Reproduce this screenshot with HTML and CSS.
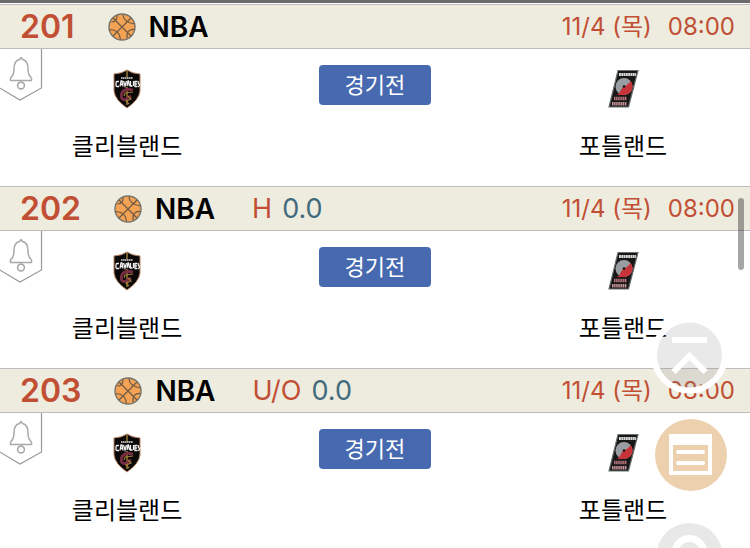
FILE: index.html
```html
<!DOCTYPE html>
<html lang="ko">
<head>
<meta charset="utf-8">
<meta name="viewport" content="width=device-width, initial-scale=1">
<title>NBA 경기 목록</title>
<link rel="stylesheet" href="styles.css">
</head>
<body>
<svg class="defs" aria-hidden="true">
  <symbol id="ball" viewBox="0 0 28 28">
    <circle cx="14" cy="14" r="13" fill="#f4a355" stroke="#77736a" stroke-width="1.400"/>
    <path d="M5 5 23 23M23 5 5 23M15 1.500Q15 9 26.500 11M1.500 16.500Q12 17 12.500 26.500M26.500 16.500Q18 16 19 25M3.500 9Q9 9 9 3" fill="none" stroke="#6f5a44" stroke-width="1.200"/>
  </symbol>
  <symbol id="bell" viewBox="0 0 43 53">
    <path d="M-1 -1H41.500V39L20 51 -1 38.500" fill="#fff" stroke="#999" stroke-width="1.200"/>
    <path d="M10.500 31.500V29Q14 26 14 20Q14 11.500 19.500 10.500L21 8.500 22.500 10.500Q28 11.500 28 20Q28 26 31.500 29V31.500Z" fill="#fff" stroke="#a9a9a9" stroke-width="1.500" stroke-linejoin="round"/>
    <circle cx="21" cy="36.500" r="3.400" fill="#fff" stroke="#a9a9a9" stroke-width="1.600"/>
  </symbol>
  <symbol id="cavaliers" viewBox="0 0 28 40">
    <path d="M14 1Q19 4.500 27 5V22Q26 31 14 39Q2 31 1 22V5Q9 4.500 14 1Z" fill="#0b0908" stroke="#b98462" stroke-width="1"/>
    <path d="M14 2V8M14 18V36" stroke="#9b7b35" stroke-width="1.500"/>
    <path d="M8 9H20" stroke="#ddd" stroke-width="1.600" stroke-dasharray="1.500 .4"/>
    <path d="M6 12.500H4Q3 12.500 3 14V16.500Q3 17.500 4 17.500H6M7 17.500 8 12H9L10 17.500M7.500 15.500H9.500M10.500 12 12 17 13.500 12M14 17 15 12H15.500L16.500 17M17.500 12V17H19.500M20.500 12V17M24.500 12.500H22V17.500H24.500M22 15H24M26 12.500Q24.500 13 26 15T25 17.500" fill="none" stroke="#f1f1f1" stroke-width="1.300"/>
    <path d="M20 21Q10 19 8.500 25Q7.500 31 12 30.500L18 27" fill="none" stroke="#772c43" stroke-width="2.800"/>
    <path d="M20 23 12 24 11 27M15 27 18 30 13 32 16 35" fill="none" stroke="#a17b37" stroke-width="1.200"/>
  </symbol>
  <symbol id="blazers" viewBox="0 0 32 40">
    <path d="M11 1.500H31L21.500 38H2Z" fill="#171717" stroke="#68716e" stroke-width="1.200"/>
    <path d="M12 5.500H29" stroke="#d8d8d8" stroke-width="3" stroke-dasharray="1.900 .4"/>
    <circle cx="17" cy="17.500" r="8.500" fill="#999da1"/>
    <path d="M23.500 12A8.500 8.500 0 0 1 17 26H10Q13 24 14 21Q15 18 18 17Q22 15 23.500 12Z" fill="#c73338"/>
    <circle cx="17" cy="17.500" r="1.300" fill="#151515"/>
    <path d="M7 29.500H20" stroke="#b9757b" stroke-width="3.600" stroke-dasharray="1.500 .6"/>
    <path d="M5 34.800H20" stroke="#c9969b" stroke-width="3.600" stroke-dasharray="1.500 .6"/>
  </symbol>
</svg>

<main class="games">
  <article class="game">
    <header class="bar">
      <span class="num">201</span>
      <svg class="ball"><use href="#ball"/></svg>
      <span class="league">NBA</span>
      <time class="when"><span>11/4 (목)</span><span>08:00</span></time>
    </header>
    <div class="match">
      <button class="alarm" type="button" aria-label="알림"><svg><use href="#bell"/></svg></button>
      <div class="team"><svg class="cavs"><use href="#cavaliers"/></svg><span>클리블랜드</span></div>
      <button class="state" type="button">경기전</button>
      <div class="team"><svg class="blazers"><use href="#blazers"/></svg><span>포틀랜드</span></div>
    </div>
  </article>
  <article class="game">
    <header class="bar">
      <span class="num">202</span>
      <svg class="ball"><use href="#ball"/></svg>
      <span class="league">NBA</span>
      <span class="type">H</span><span class="line">0.0</span>
      <time class="when"><span>11/4 (목)</span><span>08:00</span></time>
    </header>
    <div class="match">
      <button class="alarm" type="button" aria-label="알림"><svg><use href="#bell"/></svg></button>
      <div class="team"><svg class="cavs"><use href="#cavaliers"/></svg><span>클리블랜드</span></div>
      <button class="state" type="button">경기전</button>
      <div class="team"><svg class="blazers"><use href="#blazers"/></svg><span>포틀랜드</span></div>
    </div>
  </article>
  <article class="game">
    <header class="bar">
      <span class="num">203</span>
      <svg class="ball"><use href="#ball"/></svg>
      <span class="league">NBA</span>
      <span class="type">U/O</span><span class="line">0.0</span>
      <time class="when"><span>11/4 (목)</span><span>08:00</span></time>
    </header>
    <div class="match">
      <button class="alarm" type="button" aria-label="알림"><svg><use href="#bell"/></svg></button>
      <div class="team"><svg class="cavs"><use href="#cavaliers"/></svg><span>클리블랜드</span></div>
      <button class="state" type="button">경기전</button>
      <div class="team"><svg class="blazers"><use href="#blazers"/></svg><span>포틀랜드</span></div>
    </div>
  </article>
</main>

<div class="scroll-thumb"></div>
<nav class="floating">
  <button type="button" aria-label="맨 위로">
    <svg viewBox="0 0 78 78">
      <circle cx="39.500" cy="39" r="33" fill="#8c8c8c" fill-opacity=".19"/>
      <circle cx="39.500" cy="39" r="35.500" fill="none" stroke="#fff" stroke-width="6"/>
      <path d="M22 24H57M23.500 56 39.500 40 55.500 56" fill="none" stroke="#fff" stroke-width="6"/>
    </svg>
  </button>
  <button type="button" aria-label="구매 목록">
    <svg viewBox="0 0 78 78">
      <circle cx="41" cy="40" r="36" fill="#edd1af"/>
      <path d="M19 19H62V60H19ZM23 30V56H58V30Z" fill="#fff" fill-rule="evenodd"/>
      <path d="M28 37H53M28 48H53" stroke="#fff" stroke-width="4" stroke-linecap="round"/>
    </svg>
  </button>
  <button type="button" aria-label="새로고침">
    <svg viewBox="0 0 78 78">
      <circle cx="39.500" cy="42" r="38" fill="#fff"/>
      <circle cx="39.500" cy="42" r="33" fill="#e8e8e8"/>
      <circle cx="39.500" cy="39" r="14.500" fill="none" stroke="#fff" stroke-width="7"/>
    </svg>
  </button>
</nav>
</body>
</html>
```
FILE: styles.css
```css
* {
  box-sizing: border-box;
}

body {
  margin: 0;
  height: 100vh;
  overflow: hidden;
  background: #fff;
  color: #000;
  font-family: Inter, "Noto Sans CJK KR", sans-serif;
  font-size: 24px;
}

button {
  padding: 0;
  border: 0;
  background: none;
  font: inherit;
  cursor: pointer;
}

svg {
  display: block;
}

.defs {
  position: absolute;
  width: 0;
  height: 0;
}

.games {
  border-top: 3px solid #6b6b6b;
  padding-top: 1px;
}

.bar {
  display: flex;
  align-items: center;
  height: 45px;
  padding: 0 15px 0 20px;
  border: 1px solid #bdbdbd;
  border-width: 1px 0;
  background: #eeecdf;
  line-height: 32px;
  white-space: nowrap;
}

.num {
  color: #c14f34;
  font-size: 32px;
  font-weight: 600;
}

.ball {
  width: 28px;
  height: 28px;
  margin: 0 13px 0 33px;
}

.league {
  font-size: 28px;
  font-weight: 600;
}

.type,
.line {
  font-size: 27px;
}

.type {
  margin: 0 10px 0 37px;
  color: #c14f34;
}

.line {
  color: #426a7d;
}

.when {
  display: flex;
  gap: 16px;
  margin-left: auto;
  color: #c14f34;
}

.match {
  position: relative;
  display: grid;
  grid-template-columns: 21fr 20fr 21fr;
  height: 137px;
}

.alarm {
  position: absolute;
  top: 0;
  left: 0;
}

.alarm svg {
  width: 43px;
  height: 53px;
}

.team {
  display: flex;
  flex-direction: column;
  align-items: center;
  gap: 20px;
  padding-top: 20px;
  line-height: 36px;
}

.cavs {
  width: 28px;
  height: 40px;
}

.blazers {
  width: 32px;
  height: 40px;
}

.state {
  justify-self: center;
  width: 112px;
  height: 40px;
  margin-top: 16px;
  border-radius: 4px;
  background: #4669af;
  color: #fff;
  font-size: 22px;
  line-height: 40px;
}

.scroll-thumb {
  position: fixed;
  top: 198px;
  right: 6px;
  width: 6px;
  height: 72px;
  border-radius: 3px;
  background: rgba(0, 0, 0, .35);
}

.floating {
  position: fixed;
  top: 316px;
  right: 22px;
  display: grid;
  gap: 21px;
}

.floating svg {
  width: 78px;
  height: 78px;
}
```
